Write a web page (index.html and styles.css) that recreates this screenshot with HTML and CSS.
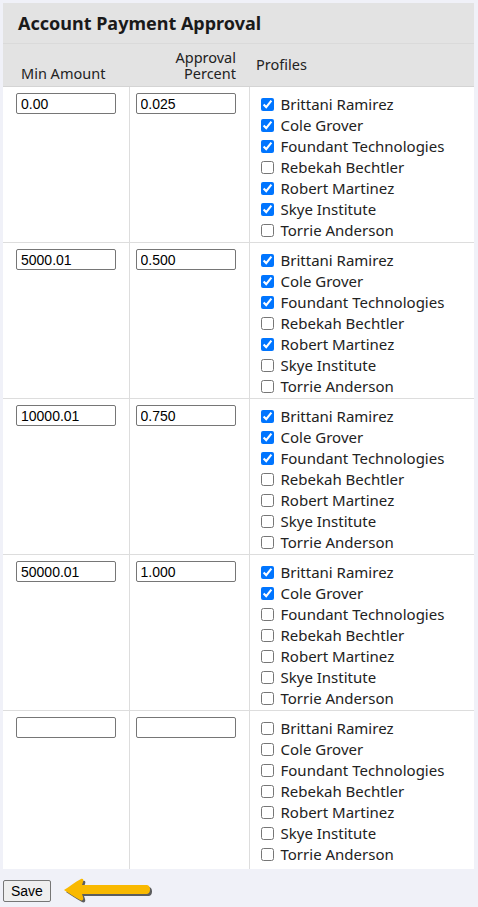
FILE: index.html
```html
<!DOCTYPE html>
<html>
<head>
<meta charset="utf-8">
<link rel="stylesheet" href="styles.css">
</head>
<body>
<div class="page">
  <div class="panel">
    <div class="title">Account Payment Approval</div>
    <table class="grid">
      <thead>
        <tr>
          <th class="c-min">Min Amount</th>
          <th class="c-pct"><span class="hl">Approval</span><span class="hl">Percent</span></th>
          <th class="c-prof">Profiles</th>
        </tr>
      </thead>
      <tbody>
        <tr>
          <td class="c-min"><input class="txt" type="text" value="0.00"></td>
          <td class="c-pct"><input class="txt" type="text" value="0.025"></td>
          <td class="c-prof">
            <label class="opt"><input type="checkbox" checked><span>Brittani Ramirez</span></label>
            <label class="opt"><input type="checkbox" checked><span>Cole Grover</span></label>
            <label class="opt"><input type="checkbox" checked><span>Foundant Technologies</span></label>
            <label class="opt"><input type="checkbox"><span>Rebekah Bechtler</span></label>
            <label class="opt"><input type="checkbox" checked><span>Robert Martinez</span></label>
            <label class="opt"><input type="checkbox" checked><span>Skye Institute</span></label>
            <label class="opt"><input type="checkbox"><span>Torrie Anderson</span></label>
          </td>
        </tr>
        <tr>
          <td class="c-min"><input class="txt" type="text" value="5000.01"></td>
          <td class="c-pct"><input class="txt" type="text" value="0.500"></td>
          <td class="c-prof">
            <label class="opt"><input type="checkbox" checked><span>Brittani Ramirez</span></label>
            <label class="opt"><input type="checkbox" checked><span>Cole Grover</span></label>
            <label class="opt"><input type="checkbox" checked><span>Foundant Technologies</span></label>
            <label class="opt"><input type="checkbox"><span>Rebekah Bechtler</span></label>
            <label class="opt"><input type="checkbox" checked><span>Robert Martinez</span></label>
            <label class="opt"><input type="checkbox"><span>Skye Institute</span></label>
            <label class="opt"><input type="checkbox"><span>Torrie Anderson</span></label>
          </td>
        </tr>
        <tr>
          <td class="c-min"><input class="txt" type="text" value="10000.01"></td>
          <td class="c-pct"><input class="txt" type="text" value="0.750"></td>
          <td class="c-prof">
            <label class="opt"><input type="checkbox" checked><span>Brittani Ramirez</span></label>
            <label class="opt"><input type="checkbox" checked><span>Cole Grover</span></label>
            <label class="opt"><input type="checkbox" checked><span>Foundant Technologies</span></label>
            <label class="opt"><input type="checkbox"><span>Rebekah Bechtler</span></label>
            <label class="opt"><input type="checkbox"><span>Robert Martinez</span></label>
            <label class="opt"><input type="checkbox"><span>Skye Institute</span></label>
            <label class="opt"><input type="checkbox"><span>Torrie Anderson</span></label>
          </td>
        </tr>
        <tr>
          <td class="c-min"><input class="txt" type="text" value="50000.01"></td>
          <td class="c-pct"><input class="txt" type="text" value="1.000"></td>
          <td class="c-prof">
            <label class="opt"><input type="checkbox" checked><span>Brittani Ramirez</span></label>
            <label class="opt"><input type="checkbox" checked><span>Cole Grover</span></label>
            <label class="opt"><input type="checkbox"><span>Foundant Technologies</span></label>
            <label class="opt"><input type="checkbox"><span>Rebekah Bechtler</span></label>
            <label class="opt"><input type="checkbox"><span>Robert Martinez</span></label>
            <label class="opt"><input type="checkbox"><span>Skye Institute</span></label>
            <label class="opt"><input type="checkbox"><span>Torrie Anderson</span></label>
          </td>
        </tr>
        <tr class="last">
          <td class="c-min"><input class="txt" type="text" value=""></td>
          <td class="c-pct"><input class="txt" type="text" value=""></td>
          <td class="c-prof">
            <label class="opt"><input type="checkbox"><span>Brittani Ramirez</span></label>
            <label class="opt"><input type="checkbox"><span>Cole Grover</span></label>
            <label class="opt"><input type="checkbox"><span>Foundant Technologies</span></label>
            <label class="opt"><input type="checkbox"><span>Rebekah Bechtler</span></label>
            <label class="opt"><input type="checkbox"><span>Robert Martinez</span></label>
            <label class="opt"><input type="checkbox"><span>Skye Institute</span></label>
            <label class="opt"><input type="checkbox"><span>Torrie Anderson</span></label>
          </td>
        </tr>
      </tbody>
    </table>
  </div>
  <div class="actions">
    <button class="save" type="button">Save</button>
    <svg class="arrow" width="96" height="28" viewBox="0 0 96 28">
      <g transform="translate(2 2)" fill="#2b2b2b" opacity="0.75">
        <path d="M3 12 C8 9 14 4 20 1 C22 0 23 2 22 4 L21 7 L86 7 C90 7 90 16 86 16 L21 16 L22 19 C23 22 21 23 19 22 C13 19 8 15 3 12 Z"/>
      </g>
      <path fill="#f9b900" d="M3 12 C8 9 14 4 20 1 C22 0 23 2 22 4 L21 7 L86 7 C90 7 90 16 86 16 L21 16 L22 19 C23 22 21 23 19 22 C13 19 8 15 3 12 Z"/>
    </svg>
  </div>
</div>
</body>
</html>
```

FILE: styles.css
```css
html, body {
  margin: 0;
  padding: 0;
}
body {
  background: #f0f1f8;
  font-family: "Noto Sans", "Open Sans", sans-serif;
  color: #222;
}
.page {
  padding: 3px 0 0 3px;
}
.panel {
  width: 471px;
  background: #fff;
}
.title {
  height: 40px;
  line-height: 40px;
  background: #e3e3e3;
  border-bottom: 1px solid #dadada;
  padding-left: 15px;
  font-size: 18px;
  font-weight: 700;
  color: #1a1a1a;
}
.grid {
  width: 100%;
  border-collapse: collapse;
  table-layout: fixed;
}
.grid thead tr {
  height: 42px;
}
.grid th {
  background: #e3e3e3;
  font-weight: 400;
  font-size: 14.5px;
  line-height: 16px;
  padding: 0;
  border-bottom: 1px solid #d4d4d4;
  color: #222;
}
.hl {
  display: block;
  line-height: 16px;
}
.grid th.c-min {
  width: 126px;
  text-align: left;
  vertical-align: bottom;
  padding-left: 18px;
  padding-bottom: 5px;
  box-sizing: border-box;
}
.grid th.c-pct {
  width: 120px;
  text-align: right;
  vertical-align: bottom;
  padding-right: 13px;
  padding-bottom: 5px;
  box-sizing: border-box;
}
.grid th.c-prof {
  text-align: left;
  vertical-align: middle;
  padding-left: 7px;
  padding-bottom: 2px;
}
.grid td {
  vertical-align: top;
  padding: 0;
  border-bottom: 1px solid #dddddd;
}
.grid td.c-min {
  padding-left: 13px;
  padding-top: 5px;
  border-right: 1px solid #dddddd;
}
.grid td.c-pct {
  padding-left: 6px;
  padding-top: 5px;
  border-right: 1px solid #dddddd;
}
.grid td.c-prof {
  padding: 7px 0 1px 7px;
}
.grid tr.last td {
  border-bottom: none;
}
.grid tr.last td.c-prof {
  padding-bottom: 4px;
}
.txt {
  box-sizing: border-box;
  width: 100px;
  height: 21px;
  margin: 0;
  padding: 1px 4px;
  border: 1px solid #767676;
  border-radius: 2px;
  font-family: "Liberation Sans", Arial, sans-serif;
  font-size: 14px;
  color: #000;
  background: #fff;
}
.opt {
  display: flex;
  align-items: center;
  height: 21px;
  font-size: 15px;
  color: #222;
}
.opt input {
  width: 13px;
  height: 13px;
  margin: 0 7px 0 4px;
}
.actions {
  display: flex;
  align-items: center;
  margin-top: 8px;
}
.save {
  box-sizing: border-box;
  height: 22px;
  padding: 1px 7px;
  margin: 0;
  border: 1px solid #767676;
  border-radius: 2px;
  background: #efefef;
  font-family: "Liberation Sans", Arial, sans-serif;
  font-size: 14px;
  color: #000;
}
.arrow {
  display: block;
  margin-left: 10px;
  margin-top: 1px;
}
```
